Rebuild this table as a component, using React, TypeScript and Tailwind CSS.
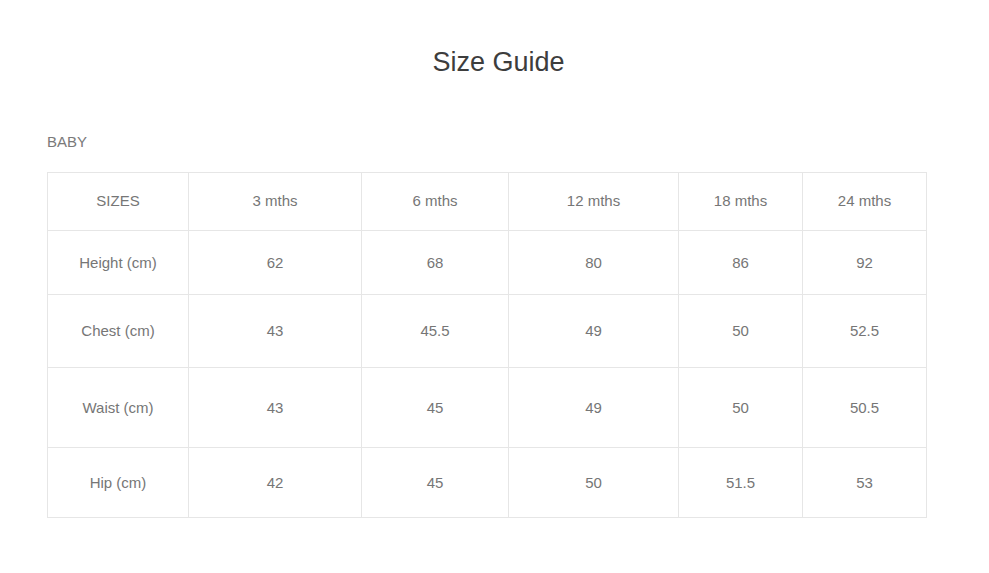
// Size guide page: title, category label and a bordered measurement table.

const columns = [
  { label: "SIZES", width: "w-[141px]" },
  { label: "3 mths", width: "w-[173px]" },
  { label: "6 mths", width: "w-[147px]" },
  { label: "12 mths", width: "w-[170px]" },
  { label: "18 mths", width: "w-[124px]" },
  { label: "24 mths", width: "w-[124px]" },
];

const rows = [
  { label: "Height (cm)", height: "h-[64px]", values: ["62", "68", "80", "86", "92"] },
  { label: "Chest (cm)", height: "h-[73px]", values: ["43", "45.5", "49", "50", "52.5"] },
  { label: "Waist (cm)", height: "h-[80px]", values: ["43", "45", "49", "50", "50.5"] },
  { label: "Hip (cm)", height: "h-[70px]", values: ["42", "45", "50", "51.5", "53"] },
];

const cell = "border border-[#e6e6e6] text-center align-middle p-0 font-normal";

export default function App() {
  return (
    <div
      className="min-h-screen bg-white text-[#767676]"
      style={{ fontFamily: '"Liberation Sans", Arial, sans-serif' }}
    >
      {/* Title */}
      <h1 className="pt-[46px] pl-2 text-center text-[27px] leading-[32px] font-normal text-[#3d3d3d]">
        Size Guide
      </h1>

      <div className="px-[47px]">
        {/* Category */}
        <h2 className="mt-[54px] text-[15px] leading-[20px] font-normal text-[#7a7a7a]">BABY</h2>

        {/* Table */}
        <table className="mt-[20px] w-[879px] table-fixed border-collapse text-[15px] leading-[20px]">
          <thead>
            <tr className="h-[58px]">
              {columns.map((c) => (
                <th key={c.label} className={`${cell} ${c.width} pb-[1px]`}>
                  {c.label}
                </th>
              ))}
            </tr>
          </thead>
          <tbody>
            {rows.map((r) => (
              <tr key={r.label} className={r.height}>
                <td className={cell}>{r.label}</td>
                {r.values.map((v, i) => (
                  <td key={i} className={cell}>
                    {v}
                  </td>
                ))}
              </tr>
            ))}
          </tbody>
        </table>
      </div>
    </div>
  );
}
